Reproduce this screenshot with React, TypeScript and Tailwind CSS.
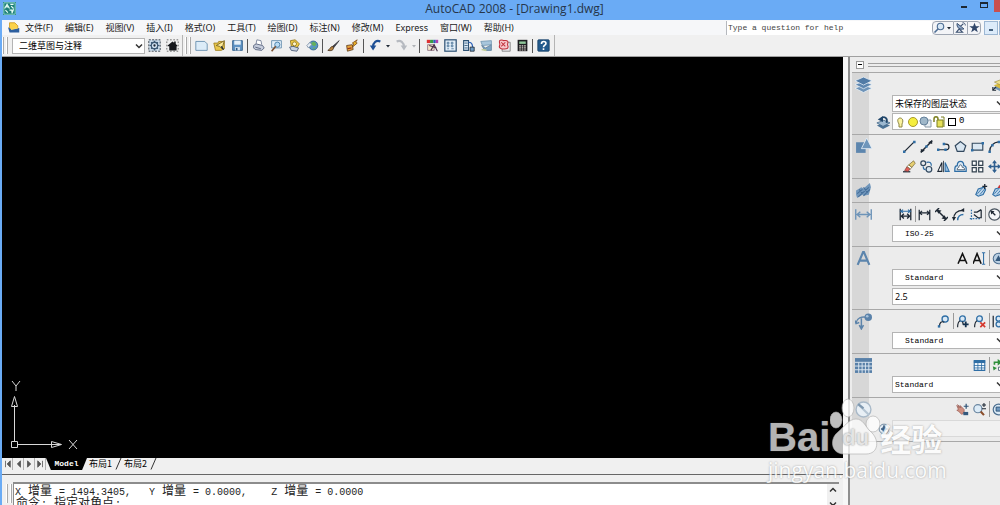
import type { ReactNode } from 'react';
import clsx from 'clsx';

const MENUS = [
  '文件(F)',
  '编辑(E)',
  '视图(V)',
  '插入(I)',
  '格式(O)',
  '工具(T)',
  '绘图(D)',
  '标注(N)',
  '修改(M)',
  'Express',
  '窗口(W)',
  '帮助(H)',
];

const BLUE = '#2f6ea5';
const INK = '#1d2733';

// Every drawing lives on a 16 x 16 grid
const ICONS: Record<string, ReactNode> = {
  app: (
    <>
      <rect width="16" height="16" fill="#1d7f78" />
      <path d="M1 1h14v14H1z" fill="none" stroke="#9fe0d4" />
      <path d="M2 8l3-5 3 5M4 6h3M9 3h4M10 5l3 3M3 10l3 3M8 10h3v3M13 9l-2 5" fill="none" stroke="#eafff8" strokeWidth="1.4" />
    </>
  ),
  drawing: (
    <>
      <path d="M2 1h7l4 4v5H2z" fill="#fbd24a" stroke="#c89213" />
      <path d="M0 7l5 3 10-2v6H2z" fill="#2d5f9f" />
      <path d="M4 10l9-2" stroke="#f7d664" strokeWidth="1.4" />
    </>
  ),
  gear: (
    <>
      <rect x="1" y="1" width="14" height="14" fill="#cfe0ef" stroke={INK} strokeDasharray="2.5 1.5" />
      <circle cx="8" cy="8" r="4" fill="none" stroke="#3d5a75" strokeWidth="1.6" />
      <circle cx="8" cy="8" r="1.4" fill={INK} />
      <path d="M8 2v2M8 12v2M2 8h2M12 8h2M3.8 3.8l1.4 1.4M10.8 10.8l1.4 1.4M12.2 3.8l-1.4 1.4M5.2 10.8l-1.4 1.4" stroke="#3d5a75" strokeWidth="1.5" />
    </>
  ),
  home: (
    <>
      <rect x="1" y="1" width="14" height="14" fill="none" stroke="#555" strokeDasharray="2 2" />
      <path d="M2 8l6-5 2 1.500V3h2v3l2 2v1h-1v5H4V9H2z" fill="#16181c" />
    </>
  ),
  newFile: <path d="M1 3h11l3 3v8H1z" fill="#dcecf8" stroke="#5c86a8" />,
  open: (
    <>
      <path d="M1 5h5l1-2h7v9l-4 2H3z" fill="#e9c74c" stroke="#9a7a1b" />
      <path d="M4 8l10-6-3 10-3-3z" fill="#fbe99a" stroke="#6e5a1d" />
      <path d="M10 9l3 4" stroke={INK} strokeWidth="1.6" />
    </>
  ),
  save: (
    <>
      <path d="M2 2h12v12H2z" fill="#5f93c4" stroke="#2c5a86" />
      <path d="M4 2h8v5H4z" fill="#e5f0f9" />
      <path d="M5 10h6v4H5z" fill="#d6e3ee" />
      <path d="M6 11h2v3H6z" fill="#2c5a86" />
    </>
  ),
  print: (
    <>
      <path d="M5 6l1-5 5 1 1 5" fill="#fff" stroke="#6b7690" />
      <path d="M2 8l3-2 8 2 2 3-3 3-8-1-2-2z" fill="#c6cddc" stroke="#4b5672" />
      <path d="M4 10l7 2" stroke="#4b5672" />
    </>
  ),
  preview: (
    <>
      <path d="M2 2h12v9H2z" fill="#e4f0fa" stroke="#5c86a8" />
      <circle cx="9" cy="7" r="3.200" fill="#b9dbf3" stroke="#37729f" />
      <path d="M7 9l-5 6" stroke="#7a5030" strokeWidth="2" />
    </>
  ),
  publish: (
    <>
      <path d="M3 2l6-1 5 5-3 5-7-2z" fill="#f3cf48" stroke="#8a6c16" />
      <circle cx="8" cy="6" r="2.500" fill="#fff7cf" stroke="#8a6c16" />
      <path d="M2 10l4-1 7 2-2 4-7-1z" fill="#c8d3e2" stroke="#42536e" />
    </>
  ),
  globe: (
    <>
      <circle cx="9" cy="8" r="5.500" fill="#5796c6" stroke="#305e88" />
      <path d="M6 5l4-2 3 3-2 3-3-1zM8 11l4-1-2 3z" fill="#65b05c" />
      <path d="M1 8l4-4 2 3-4 4z" fill="#e5edf5" stroke="#7b8da2" />
    </>
  ),
  brush: (
    <>
      <path d="M15 2L7 9l1 2z" fill="#3d3d44" stroke="#3d3d44" />
      <path d="M7 9c-3 0-3 4-6 5 4 1 7 0 7-3z" fill="#b98642" stroke="#4a3420" />
    </>
  ),
  match: (
    <>
      <path d="M15 1L9 5l2 1-3 5 7-6-2-1z" fill="#f0b928" stroke="#7b4a17" />
      <path d="M2 8l7-1 1 6-7 2z" fill="#e8a33a" stroke="#5b3b1b" />
      <path d="M3 12l5-1" stroke="#8f2e1a" strokeWidth="1.500" />
    </>
  ),
  undo: (
    <>
      <path d="M14 3C9 1 5 4 5 10" fill="none" stroke="#1d4f95" strokeWidth="2.600" />
      <path d="M1 8h8l-4 6z" fill="#1d4f95" />
    </>
  ),
  redo: (
    <>
      <path d="M2 3c5-2 9 1 9 7" fill="none" stroke="#b6bac0" strokeWidth="2.600" />
      <path d="M7 8h8l-4 6z" fill="#b6bac0" />
    </>
  ),
  props: (
    <>
      <path d="M1 1h4v4H1z" fill="#d33" />
      <path d="M5 1h4v4H5z" fill="#3a9a45" />
      <path d="M9 1h3v4H9z" fill="#2b61b8" />
      <path d="M12 1h3v4h-3z" fill="#b23fb0" />
      <path d="M2 7h8v7H2z" fill="#f5e7c9" stroke="#8a6c7e" />
      <path d="M6 14l4-7 4 8M4 8l9 3" fill="none" stroke="#4a3048" strokeWidth="1.400" />
    </>
  ),
  center: (
    <>
      <rect x="1" y="1" width="14" height="14" fill="#e2eef8" stroke="#2e5273" strokeWidth="1.500" />
      <path d="M4 4h2v2H4zM9 4h2v2H9zM4 7.500h2v2H4zM9 7.500h2v2H9zM4 12h2M9 12h3" fill="none" stroke="#37648b" strokeWidth=".9" />
    </>
  ),
  palette: (
    <>
      <path d="M2 2h6v12H2z" fill="#dcebf7" stroke="#2e5273" strokeWidth="1.300" />
      <path d="M3 5h4M3 8h4M3 11h4" stroke="#2e5273" />
      <path d="M8 4c4 0 5 2 5 6" fill="none" stroke="#2b61b8" strokeWidth="1.500" />
      <path d="M10 10h5v5h-5z" fill="#6c9bc7" stroke={INK} />
    </>
  ),
  sheets: (
    <>
      <path d="M1 3l13-1v5L3 8z" fill="#a8c6dc" stroke="#6f95b2" />
      <path d="M2 8l5 3 7-4v7H6z" fill="#7ea4c2" stroke="#5c7f9b" />
      <path d="M2 13l6 1" stroke="#c5cf9b" strokeWidth="2" />
    </>
  ),
  markup: (
    <>
      <path d="M6 4h9v11H5z" fill="#e9e9ed" stroke="#777" />
      <path d="M2 2c2-2 4 0 5 0s4-1 5 1-1 3 0 5 0 4-2 4-4 1-6 0-3-2-2-4-1-4 0-6z" fill="#f7c7cb" stroke="#c2313c" strokeWidth="1.300" />
      <path d="M4 4l5 5M9 4L4 9" stroke="#c2313c" strokeWidth="1.300" />
    </>
  ),
  calc: (
    <>
      <path d="M2 1h12v14H2z" fill="#1e1e22" />
      <path d="M4 3h8v3H4z" fill="#8fc79a" />
      <path d="M4 8.500h8M4 11h8M4 13.500h8" stroke="#e0d6d0" strokeWidth="1.400" strokeDasharray="2 1" />
    </>
  ),
  help: (
    <>
      <rect x="1" y="1" width="14" height="14" rx="1" fill="#235a8c" stroke="#163f66" />
      <path d="M5.500 6c0-4 5.500-3.500 5.500-.5C11 7.500 8 7.500 8 10M8 11.500v2" fill="none" stroke="#fff" strokeWidth="2" />
    </>
  ),
  search: (
    <>
      <circle cx="10" cy="6" r="4.300" fill="#d9e8f5" stroke="#4d6d94" strokeWidth="1.500" />
      <path d="M7 9l-5 5" stroke="#4d6d94" strokeWidth="2.200" />
    </>
  ),
  antenna: (
    <>
      <path d="M3 2c-1 6 4 10 10 8z" fill="#8fa8c7" stroke="#3b5070" strokeWidth="1.400" />
      <path d="M6 10l-4 5h9zM8 6l4-3" fill="none" stroke="#3b5070" strokeWidth="1.600" />
      <path d="M11 1c3 0 4 2 4 4" fill="none" stroke="#3b5070" strokeWidth="1.400" />
    </>
  ),
  star: <path d="M8 1l2 5h5.500l-4.500 3.500L12.800 15 8 11.700 3.200 15 5 9.500.5 6H6z" fill="#2f4568" />,
  layers: (
    <>
      <path d="M0 11.500l8-3 8 3-8 4z" fill="#6e93b8" stroke="#e9f1f8" strokeWidth=".7" />
      <path d="M0 8l8-3 8 3-8 4z" fill="#5f87b0" stroke="#e9f1f8" strokeWidth=".7" />
      <path d="M0 4.500l8-3.500 8 3.500-8 4z" fill="#517ba6" stroke="#e9f1f8" strokeWidth=".7" />
    </>
  ),
  layersYellow: (
    <>
      <path d="M1 12l9-4 9 3-9 5z" fill="#6f93b3" />
      <path d="M2 9l9-3 8 3-9 4z" fill="#d8bb3d" />
      <path d="M3 5l8-3 8 3-8 4z" fill="#efe08a" stroke="#8b7b2c" strokeWidth=".7" />
      <path d="M1 15l4-4M1 11v4h4" stroke={INK} strokeWidth="1.300" fill="none" />
    </>
  ),
  layerPrev: (
    <>
      <path d="M1 12l8-3 7 3-8 4z" fill="#4c7397" />
      <path d="M1 9l8-3 7 3-8 4z" fill="#9cb8d0" stroke="#335a7d" strokeWidth=".8" />
      <path d="M12 9C14 3 9 1 6 4" fill="none" stroke="#22476b" strokeWidth="2" />
      <path d="M8 1L2 5l6 3z" fill="#22476b" />
    </>
  ),
  shapes: (
    <>
      <path d="M1 4h9v10H1z" fill="#5d86ae" />
      <path d="M11 0l5 10H6z" fill="#6f96bb" stroke="#e4edf5" strokeWidth=".8" />
    </>
  ),
  hatchPanel: (
    <>
      <path d="M1 8l5-3 2 1 6-5 1 4-2 7-5 1-1-1-5 3-1-3z" fill="#7096bb" />
      <path d="M2 11l5-4M3 14l10-9M8 13l6-6M4 7l3 4M8 5l4 5" stroke="#466f9a" strokeWidth="1" />
    </>
  ),
  dimPanel: <path d="M.7 3v10M15.300 3v10M2 8h12M5 5.500L2 8l3 2.500M11 5.500L14 8l-3 2.500" fill="none" stroke="#6c93b8" strokeWidth="1.300" />,
  textPanel: <path d="M2.500 14L7.600 2h.8l5.100 12M4.500 10h7" fill="none" stroke="#5c85ad" strokeWidth="2" />,
  leaderPanel: (
    <>
      <path d="M11 4C6 3 2 5 1 9M6 5v9M4 11.500L6 15l2-3.500M0 7l1 3 3-1" fill="none" stroke="#5d84aa" strokeWidth="1.400" />
      <circle cx="12.500" cy="4" r="3.500" fill="#5a82aa" />
      <circle cx="11.500" cy="3" r="1.200" fill="#a9c2da" />
    </>
  ),
  tablePanel: (
    <>
      <rect x="0" y="1" width="16" height="14" fill="#5880a8" />
      <path d="M0 5h16M0 8.500h16M0 12h16M3.500 5v10M6.700 5v10M9.800 5v10M13 5v10" stroke="#dbe6f0" strokeWidth=".9" />
    </>
  ),
  compass: (
    <>
      <circle cx="8" cy="8" r="7" fill="#e8eff5" stroke="#a9b9c8" strokeWidth="1.300" />
      <path d="M3 3l10 10" stroke="#b5c5d3" strokeWidth="2" />
      <path d="M3 3l5 4" stroke="#7f98b0" strokeWidth="2" />
    </>
  ),
  line: (
    <>
      <path d="M2 14L14 2" stroke={INK} strokeWidth="1.600" />
      <path d="M0 13h3v3H0zM12.500 1h3v3h-3z" fill={BLUE} />
    </>
  ),
  xline: (
    <>
      <path d="M1 15L15 1" stroke={INK} strokeWidth="1.800" />
      <path d="M15 0v5l-5-2zM1 16v-5l5 2z" fill={INK} />
      <path d="M6.500 6.500h3v3h-3z" fill={BLUE} />
    </>
  ),
  pline: (
    <>
      <path d="M2 12h9c5 0 5-7 0-7H9" fill="none" stroke={INK} strokeWidth="1.400" />
      <path d="M0 10.500h3v3H0zM9 10.500h3v3H9zM7 3.500h3v3H7z" fill={BLUE} />
    </>
  ),
  polygon: <path d="M8 2l6.500 5L12 14H4L1.500 7z" fill="#d9e6f1" stroke="#33495f" strokeWidth="1.500" />,
  rect: (
    <>
      <path d="M1.500 4h13v8.500h-13z" fill="#dbe8f3" stroke="#33495f" strokeWidth="1.400" />
      <path d="M0 11h3v3H0zM13 2.500h3v3h-3z" fill={BLUE} />
    </>
  ),
  arc: (
    <>
      <path d="M2 15C2 8 6 3 14 2" fill="none" stroke={INK} strokeWidth="1.500" />
      <path d="M.5 13h3v3h-3zM4 5h3v3H4zM12 1h3v3h-3z" fill={BLUE} />
    </>
  ),
  erase: (
    <>
      <path d="M0 14.500h9" stroke={INK} strokeWidth="1.500" />
      <path d="M2 13l3-5 4 3-3 3z" fill="#e0605a" stroke="#7c3330" strokeWidth=".8" />
      <path d="M5 8l2-2 4 3-2 2z" fill="#fff" stroke="#6b5a25" strokeWidth=".8" />
      <path d="M7 6l6-5 2 3-4 5z" fill="#e6cf72" stroke="#6b5a25" strokeWidth=".8" />
    </>
  ),
  copy: (
    <>
      <circle cx="4" cy="4" r="3" fill="none" stroke="#33495f" strokeWidth="1.500" />
      <circle cx="11" cy="11.500" r="3.500" fill="#dbe8f3" stroke="#33495f" strokeWidth="1.500" />
      <path d="M8 3c4-1 6 0 6 4M4 8c0 3 1 4 3 4" fill="none" stroke={BLUE} strokeWidth="1.500" />
    </>
  ),
  mirror: (
    <>
      <path d="M6 3v11H1z" fill="#fff" stroke={INK} strokeWidth="1.300" />
      <path d="M10 3v11h5z" fill="#9cc0df" stroke={BLUE} strokeWidth="1.300" />
      <path d="M8 1v14" stroke={INK} />
    </>
  ),
  offset: (
    <>
      <path d="M1 14h14v-4c0-2-2-3-3-3 0-7-8-7-8 0-2 0-3 2-3 4z" fill="#dbe8f3" stroke={BLUE} strokeWidth="1.500" />
      <path d="M4 12h9c0-3-2-3-3-3 0-4-4-4-4 0-1 0-2 1-2 3z" fill="#fff" stroke="#33495f" />
    </>
  ),
  array: <path d="M1.500 1.500h5v5h-5zM9.500 1.500h5v5h-5zM1.500 9.500h5v5h-5zM9.500 9.500h5v5h-5z" fill="#fff" stroke="#33424f" strokeWidth="1.500" />,
  move: (
    <>
      <path d="M8 2v12M2 8h12" stroke="#2f5f8f" strokeWidth="2" />
      <path d="M8 0l3 4H5zM8 16l3-4H5zM0 8l4-3v6zM16 8l-4-3v6z" fill="#2f5f8f" />
    </>
  ),
  hatch: (
    <>
      <path d="M1 13l3-7 7-2 2 3-3 6-6 2z" fill="#bcd5ea" stroke={BLUE} strokeWidth="1.400" />
      <path d="M3 12l6-7M6 13l6-7" stroke={BLUE} />
      <path d="M12 0v6M9 3h6" stroke={INK} strokeWidth="1.600" />
    </>
  ),
  hatchEdit: (
    <>
      <path d="M1 13l3-7 7-2 2 3-3 6-6 2z" fill="#bcd5ea" stroke={BLUE} strokeWidth="1.400" />
      <path d="M3 12l6-7M6 13l6-7" stroke={BLUE} />
      <path d="M7 5l2-4 4 4z" fill="#c33" />
    </>
  ),
  dimQuick: (
    <>
      <path d="M1.500 1v14M14.500 1v14" stroke={INK} strokeWidth="1.600" />
      <path d="M1 4h14M5 2L2 4l3 2M11 2l3 2-3 2" fill="none" stroke={BLUE} strokeWidth="1.300" />
      <path d="M2 10h12M6 7l-3 3 3 3M10 7l3 3-3 3" fill="none" stroke={INK} strokeWidth="1.700" />
    </>
  ),
  dimLinear: <path d="M1.500 2v13M14.500 2v13M2 6h12M5 3.500L2 6l3 2.500M11 3.500L14 6l-3 2.500" fill="none" stroke={INK} strokeWidth="1.500" />,
  dimAligned: (
    <>
      <path d="M0 5l5-5M11 16l5-5M3 3l10 10" fill="none" stroke={INK} strokeWidth="1.800" />
      <path d="M2 2l6 1-4 4zM14 14l-6-1 4-4z" fill={INK} />
    </>
  ),
  dimArc: (
    <>
      <path d="M2 14C2 7 6 3 14 3" fill="none" stroke={INK} strokeWidth="1.500" />
      <path d="M7 15c0-4 3-7 7-7" fill="none" stroke={BLUE} strokeWidth="1.800" />
      <path d="M15 0v5l-5-2zM0 11h5l-3 5z" fill={INK} />
    </>
  ),
  dimOrdinate: (
    <>
      <path d="M3 2v13M1 13h14" fill="none" stroke={BLUE} strokeWidth="1.500" strokeDasharray="2 1.500" />
      <path d="M6 8l5 4h4V2M6 5h4l5-3" fill="none" stroke={INK} strokeWidth="1.500" />
    </>
  ),
  dimRadius: (
    <>
      <circle cx="8" cy="8" r="7" fill="#f4f6f8" stroke="#48535e" strokeWidth="1.400" />
      <path d="M9 9L4 4" stroke={INK} strokeWidth="1.600" />
      <path d="M3 3l5 1-4 4z" fill={INK} />
    </>
  ),
  mtext: <path d="M2.500 14.500L8 2l5.500 12.500M4.500 10.500h7" fill="none" stroke="#111" strokeWidth="1.900" />,
  dtext: (
    <>
      <path d="M0 14.500L5 2l5 12.500M2 10.500h6" fill="none" stroke="#111" strokeWidth="1.900" />
      <path d="M11 1h4M13 1v14M11 15h4" stroke={BLUE} strokeWidth="1.300" />
    </>
  ),
  globeText: (
    <>
      <circle cx="8" cy="8" r="6.500" fill="#b9cfe2" stroke="#4d6f90" strokeWidth="1.300" />
      <path d="M4 11l4-7 4 7z" fill="#34597d" />
    </>
  ),
  leader: (
    <>
      <circle cx="10" cy="5" r="3.800" fill="#dbe9f5" stroke={BLUE} strokeWidth="1.600" />
      <path d="M9 9c-4-2-6 1-6 5" fill="none" stroke={INK} strokeWidth="1.400" />
      <path d="M1 12.500h3v3H1z" fill={BLUE} />
    </>
  ),
  leaderAdd: (
    <>
      <circle cx="8" cy="4.500" r="3.500" fill="#dbe9f5" stroke={BLUE} strokeWidth="1.600" />
      <path d="M5 7c-2 1-3 3-3 8M8 8l1 4" fill="none" stroke={INK} strokeWidth="1.400" />
      <path d="M12 8v7M8.500 11.500h7" stroke="#14324f" strokeWidth="2.200" />
    </>
  ),
  leaderRemove: (
    <>
      <circle cx="8" cy="4.500" r="3.500" fill="#dbe9f5" stroke={BLUE} strokeWidth="1.600" />
      <path d="M5 7c-2 1-3 3-3 8" fill="none" stroke={INK} strokeWidth="1.400" />
      <path d="M9 9l6 6M15 9l-6 6" stroke="#d5382e" strokeWidth="2" />
    </>
  ),
  leaderAlign: (
    <>
      <path d="M1.500 1v14" stroke={INK} strokeWidth="1.500" />
      <circle cx="8" cy="4.500" r="3" fill="#dbe9f5" stroke={BLUE} strokeWidth="1.600" />
      <circle cx="8" cy="11.500" r="3" fill="#dbe9f5" stroke={BLUE} strokeWidth="1.600" />
    </>
  ),
  table: (
    <>
      <path d="M1.500 2h13v12h-13z" fill="#f2f8fd" stroke={BLUE} strokeWidth="1.300" />
      <path d="M1 2h14v3H1z" fill={BLUE} />
      <path d="M1 8h14M1 11h14M6 5v9M10.500 5v9" stroke={BLUE} />
    </>
  ),
  tableUpdate: (
    <>
      <path d="M3 7V4h6" fill="none" stroke="#2f8f3b" strokeWidth="2" />
      <path d="M7 0l5 4-5 4z" fill="#2f8f3b" />
      <path d="M8 10h8v4H8z" fill="#fff" stroke="#45576b" />
      <path d="M1 9l5 2-4 3z" fill="#2f8f3b" />
    </>
  ),
  pan: (
    <>
      <path d="M1 3l3 3-2-4 4 4-1-3 5 5v4l-3 2-4-4-2-1 2-1z" fill="#cf8f80" stroke="#9a5d55" strokeWidth=".9" />
      <path d="M12.500 1v6M9.500 4h6" stroke="#2f5275" strokeWidth="1.500" />
      <path d="M9 11h6v4H9z" fill="#34597d" />
    </>
  ),
  zoom: (
    <>
      <circle cx="6" cy="7" r="5" fill="#dcebf7" stroke="#6a86a0" strokeWidth="1.500" />
      <path d="M9.500 10.500l4 4.500" stroke="#8a4d2a" strokeWidth="2.500" />
      <path d="M13.500 0v5M11 2.500h5M11 7h5" stroke={INK} strokeWidth="1.300" />
    </>
  ),
  zoomWin: (
    <>
      <circle cx="8" cy="8" r="6.500" fill="#dcebf7" stroke="#4d6f90" strokeWidth="1.500" />
      <path d="M5 5h6v5H5z" fill="#6d96bd" stroke="#22476b" />
    </>
  ),
  orbit: (
    <>
      <circle cx="8" cy="8" r="6.500" fill="#e3ebf2" stroke="#6f899f" strokeWidth="1.300" />
      <path d="M8 3l1.500 3.500L13 8 9.500 9.500 8 13 6.500 9.500 4 8l2.500-1.500z" fill="#34597d" stroke="#34597d" />
    </>
  ),
};

function Icon({ name, className = 'size-[13px]' }: { name: string; className?: string }) {
  return (
    <svg viewBox="0 0 16 16" className={clsx('shrink-0', className)} aria-hidden="true">
      {ICONS[name]}
    </svg>
  );
}

function Chevron({ className = 'size-2' }: { className?: string }) {
  return (
    <svg viewBox="0 0 8 8" className={clsx('pointer-events-none shrink-0', className)} aria-hidden="true">
      <path d="M1 2.500l3 3 3-3" fill="none" stroke="#333" strokeWidth="1.500" />
    </svg>
  );
}

function SmallArrow({ className }: { className?: string }) {
  return (
    <svg viewBox="0 0 6 6" className={clsx('size-1.5 shrink-0', className)} aria-hidden="true">
      <path d="M1 2h4L3 4.500z" fill="#1d2733" />
    </svg>
  );
}

function TitleBar() {
  return (
    <header className="flex h-5 shrink-0 items-start bg-[#6aabf5]">
      <div className="flex flex-1 pt-0.5 pl-[3px]">
        <Icon name="app" />
      </div>
      <h1 className="ml-[26px] font-['Open_Sans',sans-serif] text-[12px] leading-[17px] text-[#26364a]">AutoCAD 2008 - [Drawing1.dwg]</h1>
      <div className="flex flex-1 items-start justify-end">
        <button aria-label="Minimize" className="flex h-3 w-5 items-end justify-center pb-1">
          <span className="h-0.5 w-1.5 bg-[#1c2733]" />
        </button>
        <button aria-label="Maximize" className="flex h-3 w-5 items-start justify-center pt-0.5">
          <span className="h-1.5 w-2 border border-t-2 border-[#1c2733]" />
        </button>
        <button aria-label="Close" className="h-3 w-1.5 bg-[#c94f50]" />
      </div>
    </header>
  );
}

function MenuBar() {
  return (
    <nav className="flex h-[15px] shrink-0 items-center bg-[#f6f7f9]">
      <Icon name="drawing" className="ml-1.5 mr-[5px] size-3" />
      <div className="flex gap-3 whitespace-nowrap font-['Noto_Sans','Noto_Sans_CJK_SC',sans-serif] text-[9px] leading-[14px] text-[#1a1a1a]">
        {MENUS.map((m) => (
          <button key={m}>{m}</button>
        ))}
      </div>
      <div className="ml-auto flex h-[14px] items-stretch">
        <input
          aria-label="Type a question for help"
          placeholder="Type a question for help"
          className="w-[206px] border-l border-[#b5b8bd] bg-white px-px font-['Liberation_Mono',monospace] text-[8px] text-[#444] outline-none placeholder:text-[#444]"
        />
        <button aria-label="Search" className="flex w-[22px] items-center justify-between rounded-l-sm border border-[#9fa6b2] bg-[#f3f4f7] pr-px">
          <Icon name="search" className="size-3" />
          <SmallArrow />
        </button>
        <button aria-label="Communication center" className="flex w-[13px] items-center justify-center border-y border-[#9fa6b2] bg-[#f3f4f7]">
          <Icon name="antenna" className="size-[11px]" />
        </button>
        <button aria-label="Favorites" className="flex w-[14px] items-center justify-center rounded-r-sm border border-[#9fa6b2] bg-[#f3f4f7]">
          <Icon name="star" className="size-[11px]" />
        </button>
        <button aria-label="Minimize drawing" className="ml-[3px] flex w-[14px] items-end justify-center border border-[#9db7d3] bg-[#dcebfa] pb-[3px]">
          <span className="h-0.5 w-1 bg-[#44607d]" />
        </button>
        <span className="ml-px w-px bg-[#9db7d3]" />
      </div>
    </nav>
  );
}

function Grip() {
  return (
    <span className="flex gap-0.5 self-stretch py-0.5">
      <span className="w-0.5 border-l border-r border-l-white border-r-[#a9a9a9]" />
      <span className="w-0.5 border-l border-r border-l-white border-r-[#a9a9a9]" />
    </span>
  );
}

function Tool({ name }: { name: string }) {
  return (
    <button aria-label={name} className="flex w-[18px] shrink-0 items-center justify-center">
      <Icon name={name} />
    </button>
  );
}

function Sep() {
  return <span className="mx-px h-3.5 w-px shrink-0 bg-[#555]" />;
}

function Toolbar() {
  return (
    <div className="flex h-[22px] shrink-0 items-center border-b border-[#a0a0a0] bg-[#f0f0f0]">
      <Grip />
      <div className="relative ml-1">
        <select
          aria-label="Workspace"
          className="block h-4 w-[133px] appearance-none border border-[#b4b4b4] bg-white pl-1.5 font-['Noto_Sans_CJK_SC',sans-serif] text-[9px] leading-[13px] text-black outline-none"
        >
          <option>二维草图与注释</option>
        </select>
        <Chevron className="absolute right-0.5 top-1 size-2" />
      </div>
      <Tool name="gear" />
      <Tool name="home" />
      <span className="mx-px h-full border-r border-[#b4b4b4]" />
      <span className="mx-px flex self-stretch">
        <Grip />
      </span>
      <Tool name="newFile" />
      <Tool name="open" />
      <Tool name="save" />
      <Sep />
      <Tool name="print" />
      <Tool name="preview" />
      <Tool name="publish" />
      <Tool name="globe" />
      <Sep />
      <Tool name="brush" />
      <Tool name="match" />
      <div className="flex items-center gap-px px-0.5">
        <Sep />
        <Tool name="undo" />
        <SmallArrow />
        <Tool name="redo" />
        <SmallArrow className="opacity-30" />
        <Sep />
      </div>
      <Tool name="props" />
      <Tool name="center" />
      <Tool name="palette" />
      <Tool name="sheets" />
      <Tool name="markup" />
      <Tool name="calc" />
      <Sep />
      <Tool name="help" />
      <span className="ml-0.5 h-full border-r border-[#b4b4b4]" />
    </div>
  );
}

function Canvas() {
  return (
    <main className="flex min-h-0 flex-1 items-end bg-black">
      <svg viewBox="0 0 80 80" className="size-20 text-[#d8d8d8]" role="img" aria-label="UCS axes">
        <g fill="none" stroke="currentColor">
          <path d="M9.500 63.500h6v6h-6zM12.500 63V27M16 66.500h43" />
          <path d="M9.500 28.500l3-10 3 10zM49.500 63.500l10 3-10 3z" />
          <path d="M10 3l4 5 4-5M14 8v5M67 62l8 9M75 62l-8 9" />
        </g>
      </svg>
    </main>
  );
}

function TabSlash() {
  return (
    <svg viewBox="0 0 8 12" className="h-3 w-2" aria-hidden="true">
      <path d="M2 11.500L7 0" stroke="#333" />
    </svg>
  );
}

function LayoutTabs() {
  const nav = ['M3 1v8M9 1L5 5l4 4z', 'M8 1L4 5l4 4z', 'M3 1l4 4-4 4z', 'M8 1v8M2 1l4 4-4 4z'];
  return (
    <div className="flex h-3 shrink-0 items-stretch bg-[#f0f0f0] font-['Noto_Sans_CJK_SC',sans-serif] text-[9px] leading-3">
      {nav.map((d) => (
        <button key={d} aria-label="Scroll tabs" className="flex w-[11px] items-center justify-center border-r border-[#b0b0b0]">
          <svg viewBox="0 0 11 10" className="h-2 w-[9px]">
            <path d={d} fill="#555" stroke="#555" />
          </svg>
        </button>
      ))}
      <button className="w-[41px] bg-black font-['Liberation_Mono',monospace] text-[8px] font-bold text-white [clip-path:polygon(0_0,100%_0,88%_100%,12%_100%)]">
        Model
      </button>
      <button className="px-0.5">布局1</button>
      <TabSlash />
      <button className="px-0.5">布局2</button>
      <TabSlash />
    </div>
  );
}

function Cjk({ children }: { children: ReactNode }) {
  return <span className="px-px font-['Noto_Sans_CJK_SC',sans-serif] text-[12px]">{children}</span>;
}

function CommandWindow() {
  return (
    <section className="flex h-[35px] shrink-0 flex-col bg-[#f0f0f0]">
      <div className="h-[5px] shrink-0 border-b border-[#666]" />
      <div className="flex min-h-0 flex-1 pt-[7px] pr-1">
        <span className="flex pl-1">
          <Grip />
        </span>
        <div className="ml-px flex min-w-0 flex-1 border-l border-t-2 border-[#8c8c8c] bg-white">
          <div className="min-w-0 flex-1 whitespace-pre pl-px font-['Liberation_Mono',monospace] text-[10px] text-[#222]">
            <p className="flex h-3 items-baseline leading-3">
              X <Cjk>增量</Cjk> = 1494.3405,{'   '}Y <Cjk>增量</Cjk> = 0.0000,{'    '}Z <Cjk>增量</Cjk> = 0.0000
            </p>
            <p className="flex h-3 items-baseline leading-3">
              <Cjk>命令</Cjk>: <Cjk>指定对角点</Cjk>:
            </p>
          </div>
          <div className="flex w-3 flex-col items-center gap-1.5 bg-[#f0f0f0] pt-0.5">
            <Chevron className="size-2 rotate-180" />
            <Chevron />
          </div>
        </div>
      </div>
    </section>
  );
}

// '|' in the list stands for a divider
function IconRow({ icons, flush = false }: { icons: string[]; flush?: boolean }) {
  return (
    <div className={clsx('flex h-5 items-center justify-end', !flush && '-mr-1')}>
      {icons.map((name, i) =>
        name === '|' ? (
          <span key={i} className="h-4 w-0.5 shrink-0 border-r border-[#999]" />
        ) : (
          <button key={i} aria-label={name} className="flex w-[17px] shrink-0 items-center justify-center">
            <Icon name={name} />
          </button>
        ),
      )}
    </div>
  );
}

function Field({ value, label, indent = false, cjk = false }: { value: string; label: string; indent?: boolean; cjk?: boolean }) {
  return (
    <div className="relative">
      <select
        aria-label={label}
        className={clsx(
          'block h-[17px] w-full appearance-none border border-[#b4b4b4] bg-white text-black outline-none',
          indent ? 'pl-3' : 'pl-0.5',
          cjk ? "font-['Noto_Sans_CJK_SC',sans-serif] text-[9px] leading-[13px]" : "font-['Liberation_Mono',monospace] text-[8px] leading-[14px]",
        )}
      >
        <option>{value}</option>
      </select>
      <Chevron className="absolute -right-px top-1 size-2" />
    </div>
  );
}

function Section({ icon, compact = false, children }: { icon: string; compact?: boolean; children: ReactNode }) {
  return (
    <section className="flex border-t border-[#a8a8a8]">
      <div className="w-[17px] shrink-0 bg-[#d7d7d7] pt-[3px] pl-[3px]">
        <Icon name={icon} className="relative size-[17px]" />
      </div>
      <div className={clsx('ml-[23px] flex w-[111px] shrink-0 flex-col pt-px', compact ? 'pb-0.5' : 'gap-px pb-1')}>{children}</div>
    </section>
  );
}

function Dashboard() {
  return (
    <aside className="flex w-[157px] shrink-0 overflow-hidden border-l-[5px] border-[#f7f7f7] bg-[#ececec]">
      <div className="mr-0.5 w-0.5 shrink-0 bg-[#8f8f8f]" />
      <div className="min-w-0 flex-1">
        <div className="flex h-[15px] items-center gap-1 pl-1">
          <button aria-label="Collapse" className="flex size-2 items-center justify-center border border-[#999] bg-white">
            <span className="h-px w-1 bg-black" />
          </button>
          <span className="h-1 flex-1 border-y border-[#a0a0a0]" />
        </div>

        <Section icon="layers">
          <IconRow icons={['layersYellow']} />
          <Field label="Layer state" value="未保存的图层状态" cjk />
          <div className="-ml-4 flex items-center gap-0.5">
            <Icon name="layerPrev" className="size-[14px]" />
            <button className="flex h-[17px] flex-1 items-center gap-px border border-[#b4b4b4] bg-white pl-0.5 font-['Liberation_Mono',monospace] text-[9px] leading-[15px]">
              <svg viewBox="0 0 52 14" className="h-3.5 w-[52px]" aria-hidden="true">
                <path d="M4 9C-1 1 11 1 7 9v3H4z" fill="#fbf3a0" stroke="#8c8443" />
                <circle cx="18" cy="7" r="4.500" fill="#f5ee3e" stroke="#a8992b" />
                <path d="M30 5h6v7h-6z" fill="#e7edf2" stroke="#8b9aa8" />
                <circle cx="29" cy="6" r="4" fill="#9fb7c9" stroke="#64809a" />
                <path d="M39 7V4c0-3 4-3 4 0v3" fill="none" stroke="#7d8022" strokeWidth="1.500" />
                <path d="M42 5h6v7h-6z" fill="#e6e05a" stroke="#7d8022" />
                <path d="M46 2h3v10" fill="none" stroke="#7d8022" />
              </svg>
              <span className="mr-0.5 size-2 border border-black bg-white" />
              <span>0</span>
            </button>
          </div>
        </Section>

        <Section icon="shapes" compact>
          <IconRow flush icons={['line', 'xline', 'pline', 'polygon', 'rect', 'arc']} />
          <IconRow flush icons={['erase', 'copy', 'mirror', 'offset', 'array', 'move']} />
        </Section>

        <Section icon="hatchPanel" compact>
          <IconRow icons={['hatch', 'hatchEdit']} />
        </Section>

        <Section icon="dimPanel">
          <IconRow flush icons={['dimQuick', '|', 'dimLinear', 'dimAligned', 'dimArc', 'dimOrdinate', '|', 'dimRadius']} />
          <Field label="Dimension style" value="ISO-25" indent />
        </Section>

        <Section icon="textPanel">
          <IconRow icons={['mtext', 'dtext', '|', 'globeText']} />
          <Field label="Text style" value="Standard" indent />
          <input
            aria-label="Text height"
            defaultValue="2.5"
            className="mt-px h-[17px] w-full border border-[#b4b4b4] bg-white pl-0.5 font-['Open_Sans',sans-serif] text-[9px] text-black outline-none"
          />
        </Section>

        <Section icon="leaderPanel">
          <IconRow icons={['leader', '|', 'leaderAdd', 'leaderRemove', '|', 'leaderAlign']} />
          <Field label="Leader style" value="Standard" indent />
        </Section>

        <Section icon="tablePanel">
          <IconRow icons={['table', '|', 'tableUpdate']} />
          <Field label="Table style" value="Standard" />
        </Section>

        <Section icon="compass">
          <IconRow icons={['pan', 'zoom', '|', 'zoomWin']} />
          <div className="-ml-3.5 flex items-center gap-0.5">
            <Icon name="orbit" className="size-3" />
            <input aria-label="View" disabled className="h-[17px] min-w-0 flex-1 border border-[#d9d9d9] bg-[#f1f1f1]" />
          </div>
        </Section>
        <div className="border-t border-[#a8a8a8]" />
      </div>
    </aside>
  );
}

function Watermark() {
  return (
    <div className="pointer-events-none absolute right-[52px] bottom-6 w-[180px] text-white">
      <div className="flex items-end">
        <span className="font-['Liberation_Sans',sans-serif] text-[40px] font-bold leading-[44px] opacity-70 [text-shadow:0_0_1px_#999]">Bai</span>
        <div className="relative mb-[3px] h-[60px] w-[50px] shrink-0">
          <svg viewBox="0 0 50 60" className="h-full w-full" aria-hidden="true">
            <g fill="#fff" fillOpacity=".75" stroke="#aaa" strokeOpacity=".6">
              <ellipse cx="6" cy="24" rx="6" ry="8" />
              <ellipse cx="18" cy="12" rx="6" ry="9" />
              <ellipse cx="43" cy="28" rx="7" ry="8" />
              <path d="M26 23c7 0 9 7 14 12 10 8 9 23-4 23H14C1 58-1 43 8 36c6-5 11-13 18-13z" />
            </g>
          </svg>
          <span className="absolute bottom-1.5 left-3 font-['Liberation_Sans',sans-serif] text-[22px] font-bold leading-6 text-[#e4e4e4] [text-shadow:0_0_2px_#888]">
            du
          </span>
        </div>
        <span className="whitespace-nowrap font-['Noto_Sans_CJK_SC',sans-serif] text-[31px] font-bold leading-[42px] opacity-80 [text-shadow:0_0_2px_#888]">
          经验
        </span>
      </div>
      <p className="font-['Open_Sans',sans-serif] text-[21px] leading-[22px] opacity-80 [text-shadow:0_0_2px_#888]">jingyan.baidu.com</p>
    </div>
  );
}

export default function App() {
  return (
    <div className="relative flex h-screen flex-col overflow-hidden bg-[#f0f0f0]">
      <TitleBar />
      <div className="flex min-h-0 flex-1 flex-col border-l-2 border-[#6aabf5]">
        <MenuBar />
        <Toolbar />
        <div className="flex min-h-0 flex-1">
          <div className="flex min-w-0 flex-1 flex-col">
            <Canvas />
            <LayoutTabs />
            <CommandWindow />
          </div>
          <Dashboard />
        </div>
      </div>
      <Watermark />
    </div>
  );
}
